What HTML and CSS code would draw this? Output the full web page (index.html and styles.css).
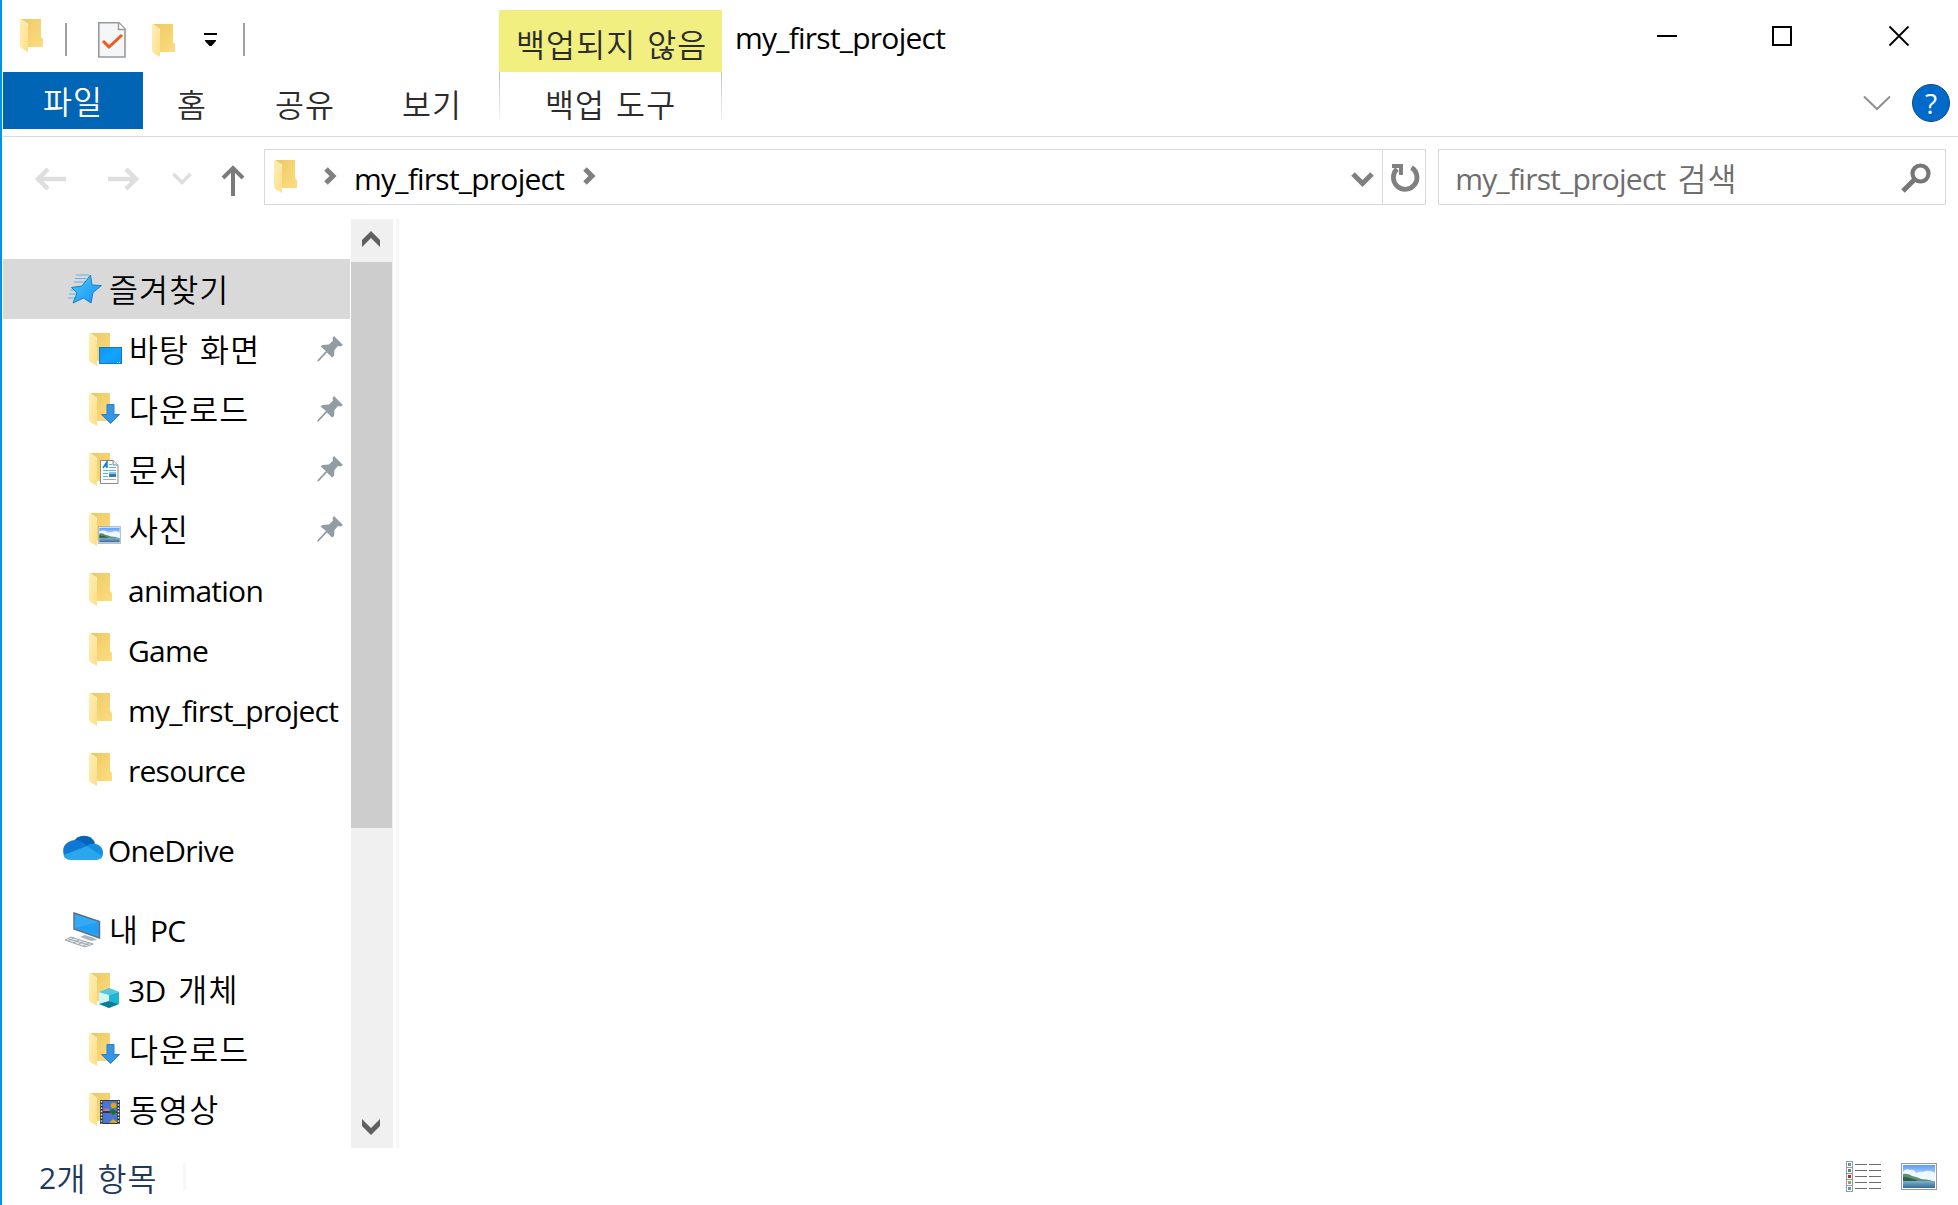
FILE: index.html
```html
<!DOCTYPE html>
<html lang="ko">
<head>
<meta charset="utf-8">
<title>my_first_project</title>
<link rel="stylesheet" href="styles.css">
</head>
<body>
<svg class="defs" width="0" height="0" aria-hidden="true">
  <defs>
    <linearGradient id="gBack" x1="0" y1="0" x2="1" y2="1"><stop offset="0" stop-color="#edc964"/><stop offset="1" stop-color="#fddd80"/></linearGradient>
    <linearGradient id="gFront" x1="0" y1="0" x2="1" y2="1"><stop offset="0" stop-color="#ffeeb4"/><stop offset="1" stop-color="#fddf88"/></linearGradient>
    <linearGradient id="gBlue" x1="0" y1="0" x2="1" y2="1"><stop offset="0" stop-color="#0f93f5"/><stop offset=".5" stop-color="#14a4ff"/><stop offset="1" stop-color="#0b95f8"/></linearGradient>
    <linearGradient id="gStar" x1="0" y1="0" x2="1" y2="1"><stop offset="0" stop-color="#56c8f8"/><stop offset="1" stop-color="#0a93fb"/></linearGradient>
    <linearGradient id="gSky" x1="0" y1="0" x2="0" y2="1"><stop offset="0" stop-color="#5b9cf8"/><stop offset=".6" stop-color="#dcf0fc"/><stop offset="1" stop-color="#cfe6f5"/></linearGradient>
    <linearGradient id="gSea" x1="0" y1="0" x2="0" y2="1"><stop offset="0" stop-color="#7fb0d0"/><stop offset="1" stop-color="#346c98"/></linearGradient>
    <symbol id="folder" viewBox="0 0 34 34">
      <path d="M1 0H21V18L23 20V28H8V5Z" fill="url(#gBack)"/>
      <path d="M0 0L5 3Q8 5 8 8V33L2 29.500Q0 28 0 26Z" fill="url(#gFront)"/>
    </symbol>
    <symbol id="scene" viewBox="0 0 36 27">
      <rect x=".5" y=".5" width="35" height="26" fill="#fff" stroke="#9a9a9a"/>
      <rect x="2" y="2" width="32" height="23" fill="url(#gSky)"/>
      <path d="M2 9Q5 5 9 7Q13 6 15 10Q19 8 22 9Q27 6 34 10V19H2Z" fill="#eef8fd"/>
      <path d="M2 11Q7 10 11 13Q16 14 20 16Q27 16 34 18.500H2Z" fill="#5d8f6c"/>
      <path d="M2 14Q9 14 18 18.500H2Z" fill="#2f604f"/>
      <rect x="2" y="18" width="32" height="7" fill="url(#gSea)"/>
    </symbol>
    <symbol id="pin" viewBox="0 0 26 26">
      <path d="M17 0L26 9L23.500 10.500L21 10L17.500 14L17 20L15 21.500L10 16.500L2 25L0 26L1 23.500L9 15L3.500 10.500L5.500 9L12 8.500L16 4.500L15.500 2Z" fill="#929ca3"/>
    </symbol>
    <symbol id="arrow" viewBox="0 0 34 34">
      <path d="M18 11.500H25V21.500H30.500L21.500 30.500L12.500 21.500H18Z" fill="#3795e6" stroke="#2a7ecc"/>
    </symbol>
  </defs>
</svg>

<div class="window">
  <header class="titlebar">
    <div class="quick">
      <svg class="folder q-app"><use href="#folder"/></svg>
      <i class="vbar"></i>
      <svg class="q-doc" viewBox="0 0 28 36"><path d="M.8 .8H21L27 7V35H.8Z" fill="#f4f6f8" stroke="#999" stroke-width="1.600"/><path d="M20.500 1V7.500H27" fill="#fff" stroke="#999" stroke-width="1.400"/><path d="M5 19L11 25L24 13" fill="none" stroke="#f2591b" stroke-width="3"/></svg>
      <svg class="folder q-new"><use href="#folder"/></svg>
      <svg class="q-drop" viewBox="0 0 13 13"><path d="M0 0H13V2H0ZM1 7H12V8L7.500 13H5.500L1 8Z"/></svg>
      <i class="vbar end"></i>
    </div>
    <div class="context-label ko">백업되지 않음</div>
    <div class="title la">my_first_project</div>
    <div class="controls">
      <svg viewBox="0 0 20 20"><path d="M0 10H20" stroke="#000" stroke-width="2"/></svg>
      <svg viewBox="0 0 20 20"><rect x="1" y="1" width="18" height="18" fill="none" stroke="#000" stroke-width="2"/></svg>
      <svg class="close" viewBox="0 0 20 20"><path d="M.5 .5L19.500 19.500M19.500 .5L.5 19.500" stroke="#000" stroke-width="1.800"/></svg>
    </div>
  </header>

  <nav class="tabs ko">
    <div class="tab file">파일</div>
    <div class="tab home">홈</div>
    <div class="tab share">공유</div>
    <div class="tab view">보기</div>
    <div class="tab context">백업 도구</div>
    <svg class="ribbon-toggle" viewBox="0 0 28 16"><path d="M1 1.500L14 14L27 1.500" fill="none" stroke="#909090" stroke-width="2"/></svg>
    <div class="help">?</div>
  </nav>

  <div class="navbar">
    <svg class="n-back" viewBox="0 0 31 24"><path d="M31 12H3M13 2L3 12L13 22" fill="none" stroke="#dedede" stroke-width="4.500"/></svg>
    <svg class="n-fwd" viewBox="0 0 31 24"><path d="M0 12H28M18 2L28 12L18 22" fill="none" stroke="#dedede" stroke-width="4.500"/></svg>
    <svg class="n-recent" viewBox="0 0 20 14"><path d="M1.500 2L10 10.500L18.500 2" fill="none" stroke="#dedede" stroke-width="3.500"/></svg>
    <svg class="n-up" viewBox="0 0 24 32"><path d="M12 31V3M2 13L12 3L22 13" fill="none" stroke="#7a7a7a" stroke-width="4"/></svg>
    <div class="address">
      <svg class="folder a-folder"><use href="#folder"/></svg>
      <svg class="crumb c1" viewBox="0 0 13 18"><path d="M2 2L9 9L2 16" fill="none" stroke="#808080" stroke-width="5"/></svg>
      <span class="la path">my_first_project</span>
      <svg class="crumb c2" viewBox="0 0 13 18"><path d="M2 2L9 9L2 16" fill="none" stroke="#808080" stroke-width="5"/></svg>
      <svg class="a-drop" viewBox="0 0 23 15"><path d="M2 2L11.500 11.500L21 2" fill="none" stroke="#808080" stroke-width="5"/></svg>
      <div class="refresh"><svg viewBox="0 0 28 28"><path d="M20.500 3.500A11.800 11.800 0 1 1 6 5" fill="none" stroke="#808080" stroke-width="4.800"/><path d="M1 0H12V11H8V4H1Z" fill="#808080"/></svg></div>
    </div>
    <div class="search"><span class="la">my_first_project</span><span class="ko">검색</span>
      <svg viewBox="0 0 30 30"><circle cx="19.500" cy="10.500" r="8" fill="none" stroke="#777" stroke-width="4.200"/><path d="M14 16L2 28" stroke="#777" stroke-width="5"/></svg>
    </div>
  </div>

  <main class="body">
    <aside class="tree">
      <div class="row root selected"><svg class="ricon" viewBox="0 0 42 34"><path d="M13 2H26M12 5.500H23M11 9H22M7 17H13M6 21H14M5 25H13" stroke="#62b3e3" stroke-width="1"/><path d="M27.500 2L29 12L38.500 12.500L30 19.500L28 30L20.500 25L10 30L14 20L8.500 14.500L19 13Z" fill="url(#gStar)" stroke="#1981c7" stroke-width="1"/></svg><span class="ko">즐겨찾기</span></div>
      <div class="row"><svg class="ricon"><use href="#folder"/><rect x="10.500" y="14.500" width="22" height="16" fill="url(#gBlue)" stroke="#1678bd"/><path d="M28 29.500H32" stroke="#d8f3ff" stroke-dasharray="1 1"/></svg><span class="ko">바탕 화면</span><svg class="pin"><use href="#pin"/></svg></div>
      <div class="row"><svg class="ricon"><use href="#folder"/><use href="#arrow"/></svg><span class="ko">다운로드</span><svg class="pin"><use href="#pin"/></svg></div>
      <div class="row"><svg class="ricon"><use href="#folder"/><path d="M11.500 7.500H24L29 12V30.500H11.500Z" fill="#fff" stroke="#888"/><path d="M24 7.500V12H29" fill="#eee" stroke="#888"/><path d="M14 15L18 9V15M16 13H18" fill="none" stroke="#1686cc" stroke-width="1.600"/><path d="M20 11.500H23M20 14.500H27M14 17.500H27M14 20.500H19M14 23.500H19" stroke="#53b6e8"/><path d="M14 26.500H27" stroke="#aaa"/><rect x="20" y="19" width="7" height="5" fill="#3e799c"/><path d="M20 19H27V21H20Z" fill="#8abdf5"/></svg><span class="ko">문서</span><svg class="pin"><use href="#pin"/></svg></div>
      <div class="row"><svg class="ricon"><use href="#folder"/><use href="#scene" x="9" y="13" width="23" height="18"/></svg><span class="ko">사진</span><svg class="pin"><use href="#pin"/></svg></div>
      <div class="row"><svg class="ricon"><use href="#folder"/></svg><span class="la">animation</span></div>
      <div class="row"><svg class="ricon"><use href="#folder"/></svg><span class="la">Game</span></div>
      <div class="row"><svg class="ricon"><use href="#folder"/></svg><span class="la">my_first_project</span></div>
      <div class="row"><svg class="ricon"><use href="#folder"/></svg><span class="la">resource</span></div>
      <div class="row root gap"><svg class="ricon" viewBox="0 0 42 34"><path d="M10 10A12 12 0 0 1 32 10L27 18Z" fill="#0364b8"/><path d="M2 25Q-4 12 9 7.500Q15 5.500 22 11L27 15L4 25Z" fill="#0f78d4"/><path d="M24 13Q27 10 33 11Q40 13 40 20Q40 24 37 26L24 18Z" fill="#1490df"/><path d="M.5 22L24 13L39 23Q37 27 33 27H8Q2 27 .5 22Z" fill="#28a8ea"/></svg><span class="la">OneDrive</span></div>
      <div class="row root gap"><svg class="ricon" viewBox="0 0 42 34"><path d="M11 0L36.500 8.500V25L11 16Z" fill="#34aaf7" stroke="#596f7c" stroke-width="1.400"/><path d="M12 15L36 9V23Z" fill="#1596f5" opacity=".6"/><path d="M22 22L31 25L34 27L28 28L17 24Z" fill="#aab7c0"/><path d="M8 24L30 31L22 34L2 27Z" fill="#e5e9ec" stroke="#9ba5ac"/><path d="M6 26L26 32M11 25L5 28M16 27L10 30M21 28.500L15 31.500M26 30L20 33" stroke="#929da5" stroke-width=".8"/></svg><span class="ko">내&nbsp;</span><span class="la">PC</span></div>
      <div class="row"><svg class="ricon"><use href="#folder"/><path d="M10 19L20 15L30 19V31L20 35L10 31Z" fill="#8be2ee"/><path d="M10 19L20 22V28L10 31Z" fill="#d3f5f8"/><path d="M20 22L30 19V31L20 28Z" fill="#1fb4cf"/><path d="M10 19L20 15L30 19L20 22Z" fill="#52c8da"/><path d="M10 31L20 28L30 31L20 35Z" fill="#087f96"/></svg><span class="la">3D</span><span class="ko">&nbsp;개체</span></div>
      <div class="row"><svg class="ricon"><use href="#folder"/><use href="#arrow"/></svg><span class="ko">다운로드</span></div>
      <div class="row"><svg class="ricon"><use href="#folder"/><rect x="11" y="7" width="20" height="24" fill="#383838"/><rect x="14" y="8" width="14" height="10" fill="#4876d8"/><rect x="14" y="20" width="14" height="10" fill="#4876d8"/><path d="M12.500 8V31M29.500 8V31" stroke="#ddd" stroke-width="1.600" stroke-dasharray="1.600 1.600"/><circle cx="24.500" cy="12.500" r="2.800" fill="#e5a60c"/><path d="M24 16L28 19L24 22L20 18Z" fill="#226e29"/><path d="M14 17L19 15L21 18H14Z" fill="#c77995"/><path d="M20 30L24 26L28 29V30Z" fill="#d9a812"/></svg><span class="ko">동영상</span></div>
    </aside>
    <div class="scroll">
      <div class="sbtn"><svg viewBox="0 0 18 16"><path d="M9 0L18 9V16L9 7L0 16V9Z" fill="#606060"/></svg></div>
      <div class="thumb"></div>
      <div class="sbtn down"><svg viewBox="0 0 18 16"><path d="M9 16L18 7V0L9 9L0 0V7Z" fill="#606060"/></svg></div>
    </div>
    <div class="divider"></div>
    <section class="content"></section>
  </main>

  <footer class="status">
    <span class="count"><span class="la">2</span><span class="ko">개 항목</span></span>
    <i class="sep"></i>
    <svg class="v-list" viewBox="0 0 36 31"><g fill="#fff" stroke="#999"><rect x=".5" y=".5" width="6" height="6"/><rect x=".5" y="6.500" width="6" height="6"/><rect x=".5" y="12.500" width="6" height="6"/><rect x=".5" y="18.500" width="6" height="6"/><rect x=".5" y="24.500" width="6" height="6"/></g><path d="M2 2H5V5H2ZM2 26H5V29H2Z" fill="#5a94b8"/><path d="M2 8H5V11H2Z" fill="#6a7a80"/><path d="M2 14H5V17H2Z" fill="#b52a16"/><path d="M2 20H5V23H2Z" fill="#a49c6c"/><path d="M9 3.500H21M23 3.500H35M9 9.500H21M23 9.500H35M9 15.500H21M23 15.500H35M9 21.500H21M23 21.500H35M9 27.500H21M23 27.500H35" stroke="#6c6c6c"/></svg>
    <svg class="v-icon"><use href="#scene"/></svg>
  </footer>
</div>
</body>
</html>
```
FILE: styles.css
```css
* { box-sizing: border-box; }
body { margin: 0; background: #fff; }
svg { display: block; flex: none; overflow: visible; }
.defs { position: absolute; }

.window {
  width: 1958px;
  height: 1205px;
  display: flex;
  flex-direction: column;
  background: #fff;
  border-left: 2px solid #0096dc;
  padding-left: 1px;
  overflow: hidden;
  color: #000;
}
.ko {
  font-family: "Noto Sans CJK KR", sans-serif;
  font-weight: 350;
  font-size: 31.5px;
  letter-spacing: 1.1px;
  word-spacing: 1px;
  line-height: 38px;
  white-space: pre;
}
.la {
  font-family: "Open Sans", "Noto Sans", sans-serif;
  font-size: 30px;
  letter-spacing: -0.75px;
  line-height: 40px;
  white-space: pre;
}
.folder { width: 34px; height: 34px; }

/* title bar */
.titlebar { display: flex; height: 72px; flex: none; }
.quick { display: flex; align-items: flex-start; width: 496px; padding-left: 17px; }
.q-app { margin-top: 19px; }
.vbar { width: 2px; height: 33px; background: #a0a0a0; margin: 23px 0 0 11px; }
.q-doc { width: 28px; height: 36px; margin: 22px 0 0 31px; }
.q-new { margin: 24px 0 0 26px; }
.q-drop { width: 13px; height: 13px; margin: 33px 0 0 18px; }
.vbar.end { margin-left: 26px; }
.context-label {
  width: 223px;
  margin-top: 10px;
  padding: 14px 0 0 17px;
  background: #f0ef80;
  color: #2b2b2b;
}
.title { padding: 18px 0 0 13px; }
.controls { display: flex; margin-left: auto; gap: 95px; padding: 26px 49px 0 0; }
.controls svg { width: 20px; height: 20px; }
.controls .close { margin-left: 2px; }

/* ribbon tabs */
.tabs {
  display: flex;
  align-items: flex-start;
  height: 65px;
  flex: none;
  border-bottom: 1px solid #d9d9d9;
  color: #2b2b2b;
}
.tab { height: 57px; padding-top: 12px; }
.file { width: 140px; padding: 9px 0 0 40px; background: #0065b5; color: #fff; }
.home { width: 97px; padding-left: 34px; }
.share { width: 128px; padding-left: 35px; }
.view { width: 131px; padding-left: 34px; }
.context {
  width: 223px;
  height: 48px;
  padding-left: 46px;
  background: linear-gradient(#c0c0c0, #f4f4f4) left / 1px 100% no-repeat, linear-gradient(#c0c0c0, #f4f4f4) right / 1px 100% no-repeat;
}
.ribbon-toggle { width: 28px; height: 16px; margin: 23px 21px 0 auto; }
.help {
  width: 38px;
  height: 38px;
  margin: 12px 8px 0 0;
  border: 1px solid #0b4b8c;
  border-radius: 50%;
  background: #006acb;
  color: #fff;
  font: 28px/36px "Open Sans", sans-serif;
  letter-spacing: 0;
  text-align: center;
}

/* navigation */
.navbar { display: flex; align-items: flex-start; height: 82px; flex: none; padding: 12px 12px 0 32px; }
.n-back, .n-fwd { width: 31px; height: 24px; margin-top: 18px; }
.n-fwd { margin-left: 42px; }
.n-recent { width: 20px; height: 14px; margin: 23px 0 0 33px; }
.n-up { width: 24px; height: 32px; margin: 16px 0 0 29px; }
.address {
  display: flex;
  align-items: flex-start;
  width: 1163px;
  height: 56px;
  margin-left: 19px;
  border: 1px solid #d9d9d9;
}
.a-folder { margin: 10px 0 0 9px; }
.crumb { width: 13px; height: 18px; margin-top: 17px; }
.c1 { margin-left: 16px; }
.path { width: 211px; margin: 9px 0 0 17px; }
.c2 { margin-left: 18px; }
.a-drop { width: 23px; height: 15px; margin: 22px 0 0 auto; }
.refresh { width: 43px; height: 54px; margin-left: 8px; padding: 14px 0 0 8px; border-left: 1px solid #d9d9d9; }
.refresh svg { width: 28px; height: 28px; }
.search {
  display: flex;
  align-items: flex-start;
  width: 508px;
  height: 56px;
  margin-left: 12px;
  padding: 9px 14px 0 16px;
  border: 1px solid #d9d9d9;
  color: #6d6d6d;
}
.search .ko { margin-left: 12px; margin-top: -1px; }
.search svg { width: 30px; height: 30px; margin: 4px 0 0 auto; }

/* tree */
.body { display: flex; flex: none; height: 929px; }
.tree { width: 347px; margin-right: 1px; padding-top: 40px; overflow: hidden; }
.row { display: flex; align-items: flex-start; height: 60px; padding: 10px 7px 0 86px; }
.row.root { padding-left: 60px; }
.row.gap { margin-top: 20px; }
.row .la { margin-top: 2px; }
.row .ricon + .ko { margin-left: 1px; }
.row .la + .ko { margin-left: 2px; }
.selected { background: #d9d9d9; }
.ricon { width: 34px; height: 34px; margin: 4px 5px 0 0; }
.root .ricon { width: 42px; margin-right: 3px; }
.pin { width: 26px; height: 26px; margin: 7px 0 0 auto; }

.scroll { display: flex; flex-direction: column; width: 42px; background: #f0f0f0; }
.sbtn { height: 43px; padding: 12px 0 0 11px; }
.sbtn svg { width: 18px; height: 16px; }
.thumb { width: 41px; height: 566px; background: #cdcdcd; }
.sbtn.down { height: 42px; margin-top: auto; padding-top: 13px; }
.divider { width: 3px; margin-left: 3px; background: #f7f7f7; }
.content { flex: 1; }

/* status bar */
.status { display: flex; align-items: flex-start; height: 57px; flex: none; padding: 0 21px 0 36px; color: #1e395b; }
.count { display: flex; width: 144px; padding-top: 10px; }
.count .ko { margin-left: 1px; }
.sep { width: 3px; height: 28px; margin-top: 15px; background: #f7f7f7; }
.v-list { width: 36px; height: 31px; margin: 13px 19px 0 auto; }
.v-icon { width: 36px; height: 27px; margin-top: 15px; }
```
